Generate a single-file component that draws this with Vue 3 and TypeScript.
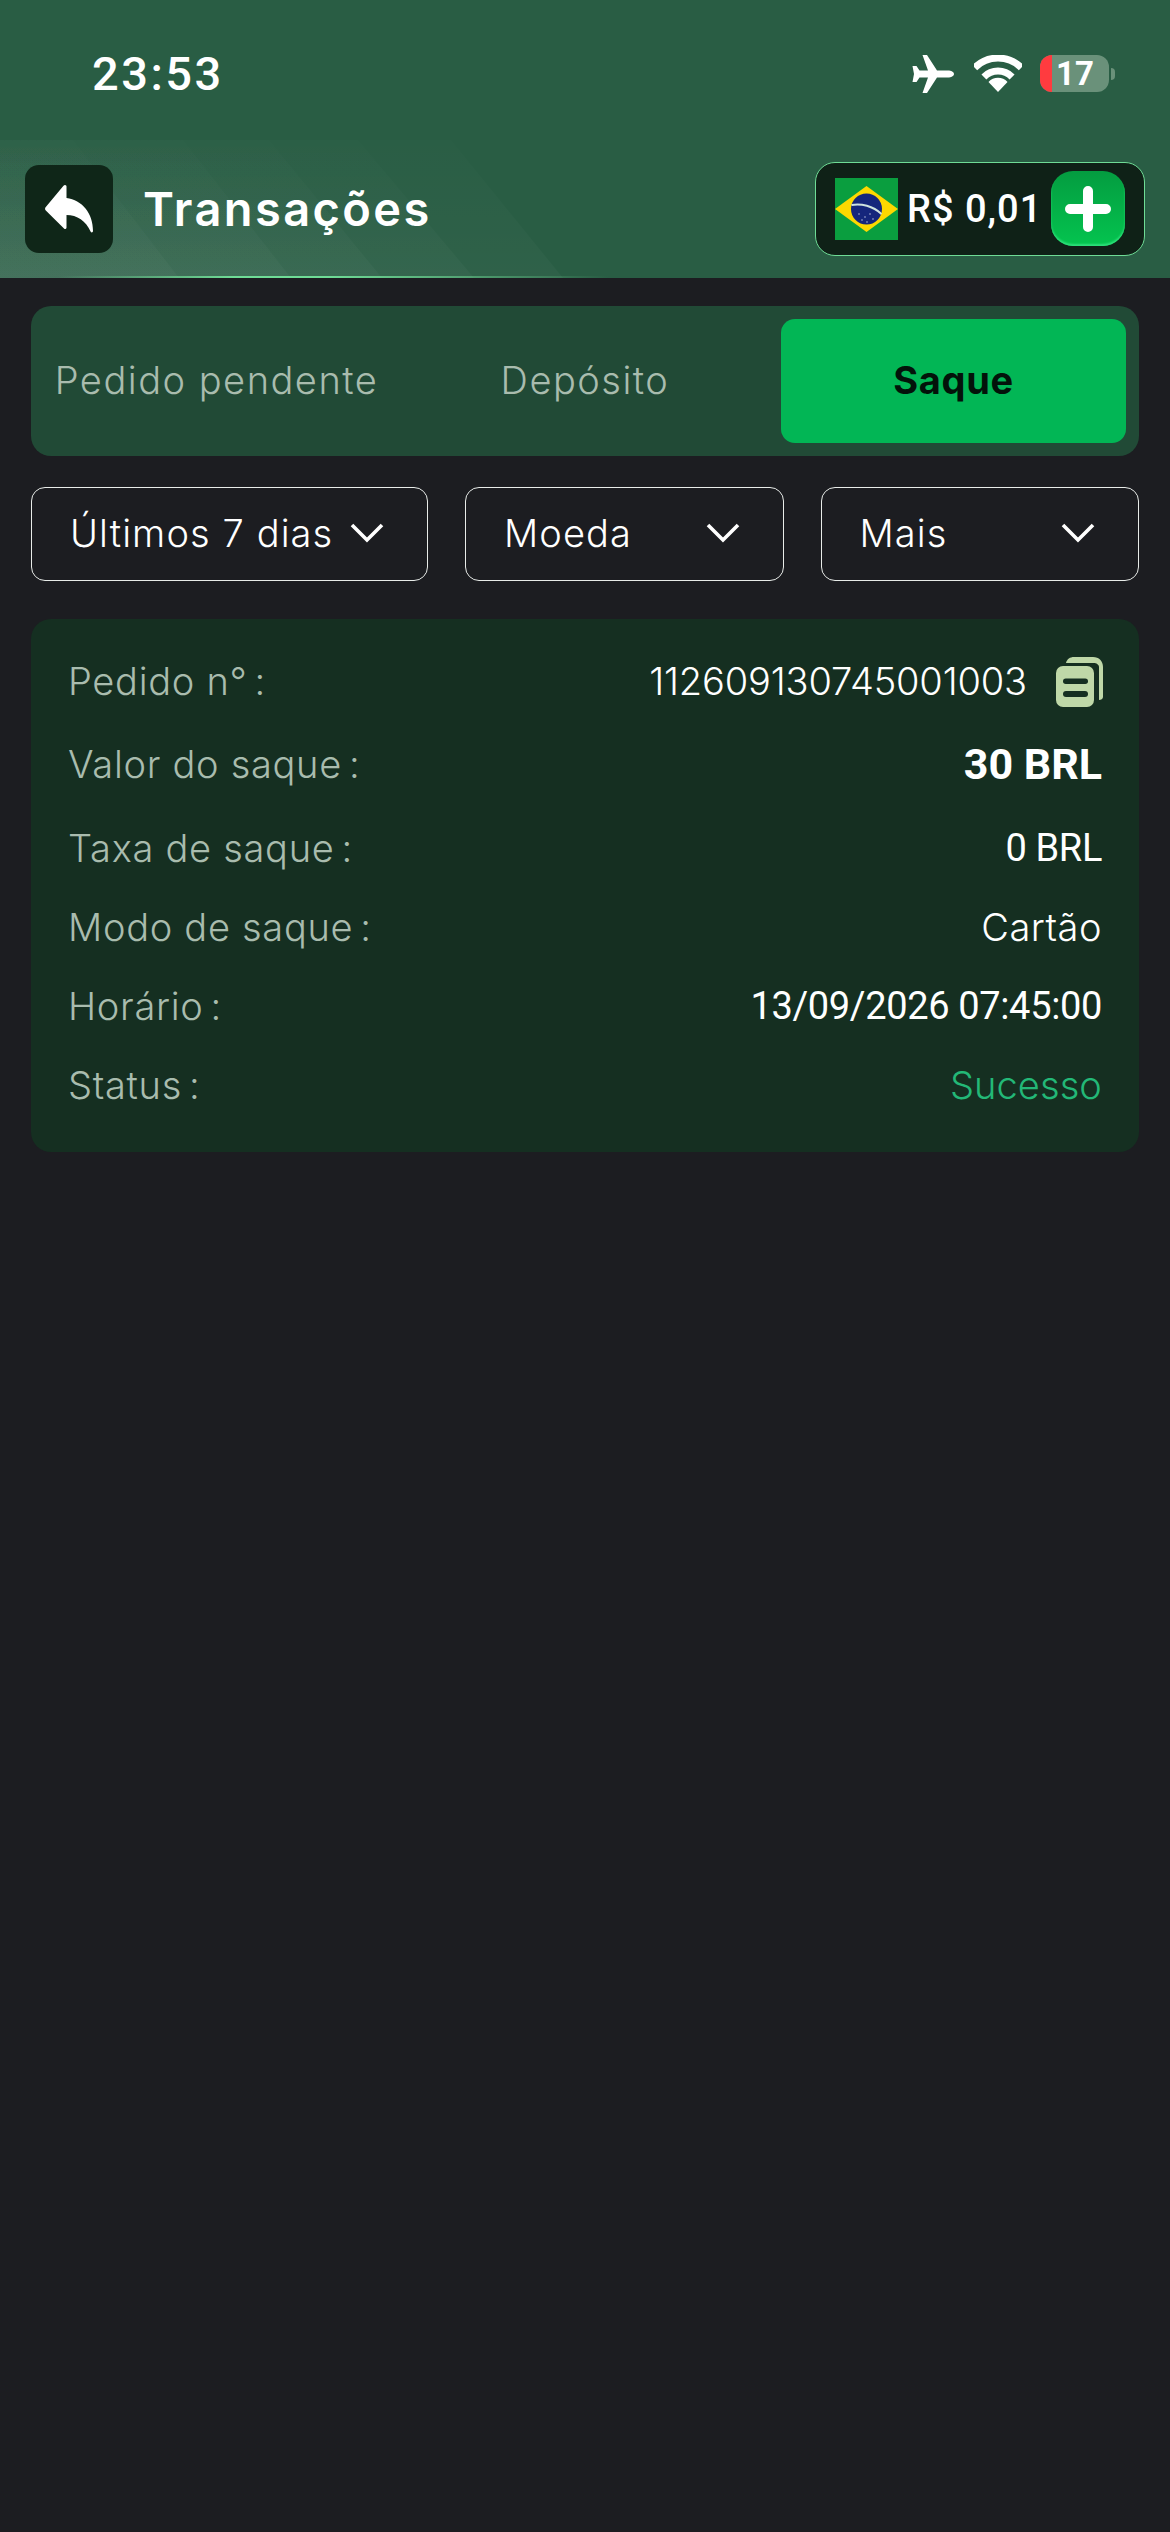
<template>
  <div class="page">
    <header class="top">
      <svg class="top-pattern" width="1170" height="138" viewBox="0 0 1170 138">
        <defs>
          <linearGradient id="band" x1="0" y1="0" x2="0" y2="1">
            <stop offset="0" stop-color="#fff" stop-opacity="0.006" />
            <stop offset="1" stop-color="#fff" stop-opacity="0.028" />
          </linearGradient>
        </defs>
        <polygon v-for="b in bands" :key="b" :points="b" fill="url(#band)" />
      </svg>
      <div class="status">
        <span class="time">23:53</span>
        <div class="status-icons">
          <svg class="plane" width="42" height="38" viewBox="0 0 42 38">
            <path
              fill="#fff"
              d="M42 19c0 2-3 3.500-6 3.500H25L15 38h-4.500L16 22.500H7.500L4.500 27H.5L2 19 .5 11h4l3 4.500H16L10.500 0H15l10 15.500h11c3 0 6 1.500 6 3.500z"
            />
          </svg>
          <svg width="48" height="37" viewBox="0 0 48 37">
            <path fill="none" stroke="#fff" stroke-width="7" d="M.7 12.700A33 33 0 0 1 47.300 12.700" />
            <path fill="none" stroke="#fff" stroke-width="7" d="M9.900 21.900A20 20 0 0 1 38.100 21.900" />
            <path fill="#fff" d="M24 37 14.500 27A13 13 0 0 1 33.500 27z" />
          </svg>
          <div class="battery">
            <div class="battery-body">
              <span class="battery-low"></span>
              <span class="battery-num">17</span>
            </div>
            <span class="battery-nub"></span>
          </div>
        </div>
      </div>
      <nav class="nav">
        <button class="back">
          <svg width="48" height="48" viewBox="0 0 48 48">
            <path
              fill="#fff"
              d="M20 0c1 0 1.500.8 1.500 1.500V13C37 15 48 28 48 46c0 1.500-1.500 2-2.300.8C41 36 32 30 21.500 30v12.500c0 1.500-1.500 2-2.500 1L.8 25.500c-1-1-1-2.500 0-3.500L18.500.8c.4-.5 1-.8 1.500-.8z"
            />
          </svg>
        </button>
        <h1 class="title">Transações</h1>
        <div class="balance">
          <svg class="flag" width="63" height="62" viewBox="0 0 63 62">
            <rect width="63" height="62" fill="#0a9e3f" />
            <polygon points="0,31 31.500,8 63,31 31.500,54" fill="#fdd800" />
            <circle cx="31.500" cy="31" r="15.500" fill="#15267c" />
            <path d="M16.500 27C26 25 38 28 46.500 36" fill="none" stroke="#cfe3df" stroke-width="2" />
            <g fill="#cfd8ee">
              <circle cx="24" cy="36" r=".7" />
              <circle cx="30" cy="39" r=".7" />
              <circle cx="35" cy="36" r=".7" />
              <circle cx="38" cy="41" r=".7" />
              <circle cx="27" cy="42" r=".7" />
              <circle cx="32" cy="44" r=".7" />
            </g>
          </svg>
          <span class="amount">R$ 0,01</span>
          <button class="plus">
            <svg width="46" height="46" viewBox="0 0 46 46">
              <path d="M23 5v36M5 23h36" stroke="#fff" stroke-width="10" stroke-linecap="round" />
            </svg>
          </button>
        </div>
      </nav>
    </header>

    <main class="content">
      <div class="tabs">
        <div
          v-for="t in tabs"
          :key="t"
          class="tab"
          :class="{ active: t === activeTab }"
        >
          {{ t }}
        </div>
      </div>

      <div class="filters">
        <div v-for="f in filters" :key="f.label" class="filter" :class="f.cls">
          <span>{{ f.label }}</span>
          <svg width="34" height="20" viewBox="0 0 34 20">
            <path d="M2 2l15 15L32 2" fill="none" stroke="#fff" stroke-width="3.600" />
          </svg>
        </div>
      </div>

      <section class="card">
        <div v-for="r in rows" :key="r.label" class="row" :class="r.cls">
          <span class="label">{{ r.label }}<i class="colon">:</i></span>
          <span class="value">
            {{ r.value }}
            <svg v-if="r.copy" class="copy" width="47" height="51" viewBox="0 0 47 51">
              <path
                fill="#bfd8a8"
                d="M10 7c1-4 4-6 8-6h19c6 0 10 4 10 10v30c0 2-2 3-4 3V11c0-2.500-3-4-5-4z"
              />
              <rect y="10" width="38" height="41" rx="7" fill="#bfd8a8" />
              <rect x="7" y="22.500" width="25" height="5.500" rx="2.750" fill="#152f21" />
              <rect x="7" y="35" width="25" height="6" rx="3" fill="#152f21" />
            </svg>
          </span>
        </div>
      </section>
    </main>
  </div>
</template>

<script setup lang="ts">
interface Row {
  label: string
  value: string
  cls: string
  copy?: boolean
}

const activeTab = 'Saque'
const tabs = ['Pedido pendente', 'Depósito', 'Saque']

const filters = [
  { label: 'Últimos 7 dias', cls: 'wide' },
  { label: 'Moeda', cls: '' },
  { label: 'Mais', cls: '' },
]

const rows: Row[] = [
  { label: 'Pedido n°', value: '112609130745001003', cls: 'order', copy: true },
  { label: 'Valor do saque', value: '30 BRL', cls: 'amount-row' },
  { label: 'Taxa de saque', value: '0 BRL', cls: 'num' },
  { label: 'Modo de saque', value: 'Cartão', cls: 'text' },
  { label: 'Horário', value: '13/09/2026 07:45:00', cls: 'num' },
  { label: 'Status', value: 'Sucesso', cls: 'text ok' },
]

// stacked light wedges of the header, each one reaches further right
const bands = [
  [73, 179],
  [183, 291],
  [269, 382],
  [358, 474],
  [451, 563],
].map(([t, b]) => `0,0 ${t},0 ${b},138 0,138`)
</script>

<style>
html,
body {
  margin: 0;
  background: #1c1d21;
}
</style>

<style scoped>
.page {
  width: 1170px;
  min-height: 2532px;
  background: #1c1d21;
  font-family: Inter, 'Noto Sans', sans-serif;
  color: #fff;
}
.top {
  position: relative;
  height: 278px;
  background: #295d44;
}
.top::after {
  content: '';
  position: absolute;
  left: 0;
  right: 0;
  bottom: 0;
  height: 2px;
  background: linear-gradient(90deg, transparent 5%, #6fdc96 20%, #6fdc96 28%, transparent 52%);
}
.top-pattern {
  position: absolute;
  left: 0;
  top: 140px;
}
.status {
  position: relative;
  height: 140px;
  display: flex;
  align-items: center;
  justify-content: space-between;
  padding: 6px 55px 0 92px;
  box-sizing: border-box;
}
.time {
  font-family: Roboto, sans-serif;
  font-size: 47px;
  font-weight: 500;
  letter-spacing: 2.500px;
}
.status-icons {
  display: flex;
  align-items: center;
  gap: 18px;
  margin-bottom: -1px;
}
.plane {
  margin-right: 2px;
}
.battery {
  display: flex;
  align-items: center;
  gap: 2px;
}
.battery-body {
  width: 69px;
  height: 37px;
  border-radius: 12px;
  background: #6a917a;
  overflow: hidden;
  display: flex;
  align-items: center;
}
.battery-low {
  width: 12px;
  height: 100%;
  background: #ff3b3f;
}
.battery-num {
  margin-left: 4px;
  font-family: Roboto, sans-serif;
  font-size: 33px;
  font-weight: 700;
}
.battery-nub {
  width: 4px;
  height: 12px;
  border-radius: 0 6px 6px 0;
  background: #6a917a;
}
.nav {
  position: relative;
  height: 138px;
  display: flex;
  align-items: center;
  padding: 0 25px;
  box-sizing: border-box;
}
.back {
  width: 88px;
  height: 88px;
  padding: 0;
  border: 0;
  border-radius: 14px;
  background: #0f2618;
  display: flex;
  align-items: center;
  justify-content: center;
}
.title {
  margin: 0 0 2px 30px;
  font-size: 47px;
  font-weight: 600;
  letter-spacing: 2.400px;
  flex: 1;
}
.balance {
  width: 330px;
  height: 94px;
  margin-top: -1px;
  box-sizing: border-box;
  border: 1.500px solid #6fdc96;
  border-radius: 20px;
  background: #0f2117;
  display: flex;
  align-items: center;
  padding: 0 19px;
}
.amount {
  margin-left: 9px;
  font-family: Roboto, sans-serif;
  font-size: 38px;
  font-weight: 500;
  letter-spacing: 1px;
  white-space: nowrap;
  flex: 1;
}
.plus {
  width: 74px;
  height: 75px;
  padding: 0;
  border: 0;
  border-radius: 22px;
  background: linear-gradient(180deg, #049c40, #04c44f);
  box-shadow: inset 0 -2px 2px #2ee07a;
  display: flex;
  align-items: center;
  justify-content: center;
}
.content {
  padding: 28px 31px 0;
}
.tabs {
  height: 150px;
  padding: 13px;
  box-sizing: border-box;
  border-radius: 20px;
  background: #214a36;
  display: grid;
  grid-template-columns: repeat(3, 1fr);
  gap: 23.500px;
}
.tab {
  display: flex;
  align-items: center;
  justify-content: center;
  padding-bottom: 2px;
  border-radius: 14px;
  font-size: 38px;
  font-weight: 300;
  letter-spacing: 1.500px;
  color: #a9bcae;
  white-space: nowrap;
}
.tab.active {
  background: #02b655;
  color: #03130a;
  font-weight: 700;
  letter-spacing: 0.700px;
}
.filters {
  display: flex;
  gap: 37px;
  margin-top: 31px;
}
.filter {
  flex: 1;
  height: 94px;
  box-sizing: border-box;
  border: 1.500px solid #e8ece9;
  border-radius: 14px;
  display: flex;
  align-items: center;
  justify-content: space-between;
  padding: 0 43px 2px 38px;
  font-size: 38px;
  font-weight: 300;
  letter-spacing: 1.100px;
  white-space: nowrap;
}
.filter.wide {
  flex: none;
  width: 397px;
}
.card {
  margin-top: 38px;
  padding: 40px 37px 44px;
  border-radius: 20px;
  background: #152f21;
  display: flex;
  flex-direction: column;
  gap: 33px;
}
.row {
  height: 46px;
  display: flex;
  align-items: center;
  justify-content: space-between;
}
.row.order {
  height: 44px;
}
.row.amount-row {
  height: 56px;
}
.label {
  font-size: 38px;
  font-weight: 300;
  letter-spacing: 0.700px;
  color: #a9bcae;
}
.colon {
  font-style: normal;
  margin-left: 7px;
}
.value {
  display: flex;
  align-items: center;
  font-size: 38px;
  white-space: nowrap;
}
.order .value {
  font-weight: 300;
  letter-spacing: -0.150px;
}
.text .value {
  font-weight: 300;
  letter-spacing: 0.500px;
}
.num .value,
.amount-row .value {
  font-family: Roboto, sans-serif;
  font-weight: 400;
}
.num .value {
  letter-spacing: -0.350px;
}
.amount-row .value {
  font-size: 43px;
  font-weight: 700;
}
.text.ok .value {
  color: #23b877;
  letter-spacing: 0.100px;
}
.copy {
  margin: -4px -1px -4px 29px;
}
</style>
